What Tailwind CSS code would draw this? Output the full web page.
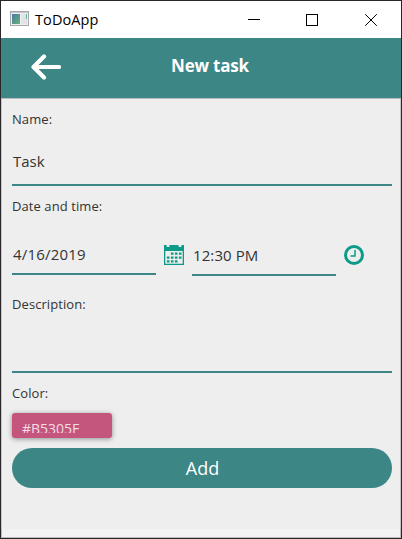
<!DOCTYPE html>
<html lang="en">
<head>
<meta charset="utf-8">
<title>ToDoApp</title>
<script src="https://cdn.jsdelivr.net/npm/@tailwindcss/browser@4"></script>
</head>
<body class="w-[402px] h-[539px] overflow-hidden font-['Open_Sans',sans-serif] text-[#333]">
<div class="w-[402px] h-[539px] border border-[#29272a] flex flex-col bg-[#eee]">
  <header class="h-[37px] shrink-0 bg-white flex items-center pl-[9px] text-black">
    <svg class="w-[19px] h-[15px] shrink-0 -mt-[2px]" viewBox="0 0 19 15">
      <defs><linearGradient id="screen" x1="0" y1="0" x2="1" y2="1"><stop stop-color="#4a7ba0"/><stop offset="1" stop-color="#65b278"/></linearGradient></defs>
      <rect x=".5" y=".5" width="18" height="14" fill="#f0f0f0" stroke="#a6a8ab"/>
      <rect x="1" y="1" width="17" height="1" fill="#c3c7cc"/>
      <rect x="2" y="3" width="8" height="10" fill="url(#screen)"/>
      <rect x="11" y="3" width="6" height="10" fill="#e1e3e5"/>
      <rect x="16" y="3" width="1" height="5" fill="#62b0a0"/>
    </svg>
    <span class="ml-[6px] w-[66px] text-[14.5px] leading-[20px] whitespace-nowrap tracking-[0.1px]">ToDoApp</span>
    <svg class="ml-[147px] w-[131px] h-[12px] shrink-0" viewBox="0 0 131 12" fill="none" stroke="#000">
      <path d="M0 5.5h12M58.500 .5h11v11h-11z" shape-rendering="crispEdges"/>
      <path d="M117.200 .2l11.600 11.600M128.800 .2l-11.600 11.600"/>
    </svg>
  </header>
  <div class="h-[61px] shrink-0 bg-[#3c8686] border-b border-[#bcbcbf] relative flex justify-center pl-[18px] text-white">
    <svg class="absolute left-[30px] top-[16px] w-[30px] h-[26px]" viewBox="0 0 30 26" fill="none" stroke="#fff" stroke-width="4.200" stroke-linecap="round" stroke-linejoin="round"><path d="M13 2.500L2.500 13l10.500 10.500M3 13h25"/><path d="M3 13l3-3v6z" fill="#fff" stroke-width="2"/></svg>
    <h1 class="text-[17px] leading-[24px] pt-[16px] font-bold whitespace-nowrap tracking-[-0.2px]">New task</h1>
  </div>
  <main class="h-[430px] shrink-0 pl-[10px] pr-[9px] border-x border-[#c8c8c8] flex flex-col text-[13px]">
    <div class="w-[380px] flex flex-col">
      <label class="mt-[10px] h-[20px] leading-[20px] tracking-[0.08px]">Name:</label>
      <div class="mt-[14px] h-[43px] border-b-2 border-[#3c8686] pl-px pt-[7px] text-[15px] leading-[22px]">Task</div>
      <label class="mt-[10px] h-[20px] leading-[20px] tracking-[0.08px]">Date and time:</label>
      <div class="mt-[19px] h-[41px] flex items-start">
        <div class="w-[144px] h-[40px] border-b-2 border-[#3c8686] pl-px pt-[8px] text-[15px] leading-[22px] tracking-[0.2px]">4/16/2019</div>
        <svg class="ml-[8px] mt-[10px] w-[20px] h-[20px]" viewBox="0 0 20 20" fill="#0b9b88">
          <path fill-rule="evenodd" d="M0 0h2.500v1q0 1 1 1h1q1 0 1-1V0h9v1q0 1 1 1h1q1 0 1-1V0H20v20H0zM1.300 6v12.700h17.400V6z"/>
          <path d="M6.900 7.500h2.600v2.200H6.900zM10.900 7.500h2.600v2.200h-2.600zM14.900 7.500h2.600v2.200h-2.600zM2.900 11.500h2.600v2.200H2.900zM6.900 11.500h2.600v2.200H6.900zM10.900 11.500h2.600v2.200h-2.600zM14.900 11.500h2.600v2.200h-2.600zM2.900 15.300h2.600v2.200H2.900zM6.900 15.300h2.600v2.200H6.900zM10.900 15.300h2.600v2.200h-2.600z"/>
        </svg>
        <div class="ml-[8px] w-[144px] h-[41px] border-b-2 border-[#3c8686] pl-px pt-[9px] text-[15px] leading-[22px] tracking-[0.1px]">12:30 PM</div>
        <svg class="ml-[8px] mt-[10px] w-[20px] h-[20px]" viewBox="0 0 20 20" fill="none" stroke="#0b9b88"><circle cx="10" cy="10" r="8.500" stroke-width="3"/><path d="M11 5v6H6.500" stroke-width="1.500"/></svg>
      </div>
      <label class="mt-[18px] h-[20px] leading-[20px] tracking-[0.08px]">Description:</label>
      <div class="mt-[19px] h-[40px] border-b-2 border-[#3c8686]"></div>
      <label class="mt-[10px] h-[20px] leading-[20px] tracking-[0.08px]">Color:</label>
      <div class="mt-[10px] w-[100px] h-[25px] rounded-[3px] bg-[#c4567e] shadow-[0_1px_5px_rgba(0,0,0,0.4)] pl-[10px] pt-[5px]">
        <div class="h-[15px] overflow-hidden pt-px text-[14px] leading-[20px] text-[#f3dce5]">#B5305F</div>
      </div>
      <button class="mt-[10px] h-[40px] rounded-full bg-[#3c8686] pl-px text-white text-[18px] leading-[40px]">Add</button>
    </div>
  </main>
  <footer class="h-[9px] shrink-0 bg-[#f3f3f3] border-x border-b border-[#bcbcbf]"></footer>
</div>
</body>
</html>
